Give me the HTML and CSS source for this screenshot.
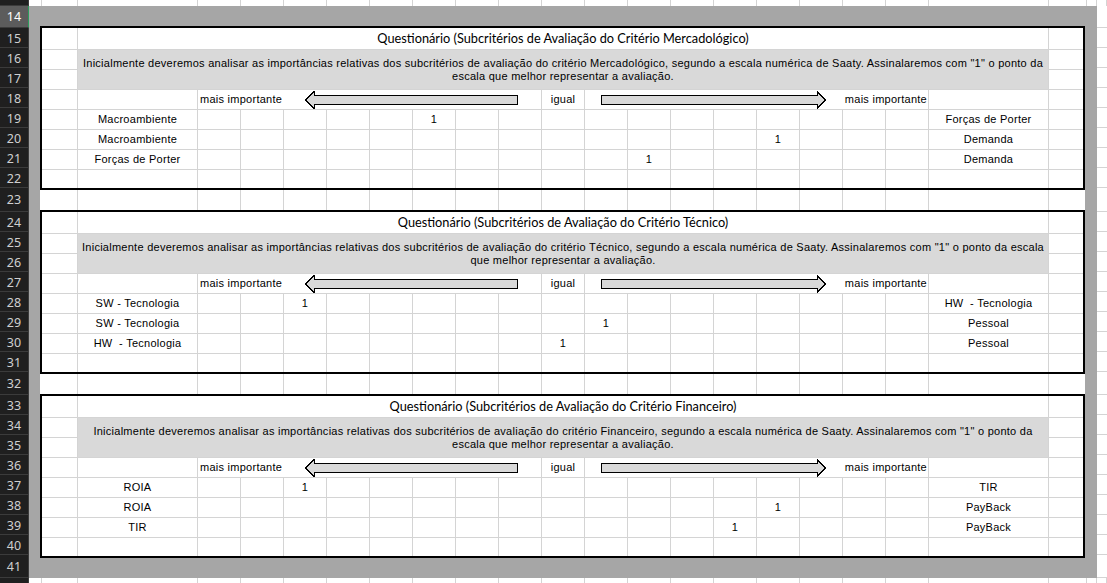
FILE: index.html
```html
<!DOCTYPE html>
<html lang="pt">
<head>
<meta charset="utf-8">
<title>Questionário</title>
<link rel="stylesheet" href="styles.css">
</head>
<body>
<div class="app">
  <div class="rh">
    <div class="h13"><span>13</span></div>
    <div class="h14 sel">14</div>
    <div>15</div><div>16</div><div>17</div><div>18</div><div>19</div><div>20</div><div>21</div><div>22</div>
    <div class="h24">23</div>
    <div>24</div><div>25</div><div>26</div><div>27</div><div>28</div><div>29</div><div>30</div><div>31</div>
    <div class="h23">32</div>
    <div>33</div><div>34</div><div>35</div><div>36</div><div>37</div><div>38</div><div>39</div><div>40</div>
    <div class="h23">41</div>
    <div class="h42">42</div>
  </div>
  <div class="sheet">
    <div class="edge top"><i></i><i></i><i></i><i></i><i></i><i></i><i></i><i></i><i></i><i></i><i></i><i></i><i></i><i></i><i></i><i></i><i></i><i></i><i></i><i></i><i></i><i></i><i></i><i></i></div>
    <div class="mid">
      <div class="frame">
        <div class="blk">
          <i></i><div class="title">Questionário (Subcritérios de Avaliação do Critério Mercadológico)</div><i class="z"></i>
          <i></i><div class="note">Inicialmente deveremos analisar as importâncias relativas dos subcritérios de avaliação do critério Mercadológico, segundo a escala numérica de Saaty. Assinalaremos com "1" o ponto da<br>escala que melhor representar a avaliação.</div><i class="z"></i>
          <i></i><i class="z"></i>
          <i></i><i></i><div class="lft"><span>mais importante</span><svg class="arl" width="213" height="18" viewBox="0 0 213 18" shape-rendering="crispEdges"><path d="M0.5 9 L9 0.5 L9 4.5 L212.5 4.5 L212.5 13.5 L9 13.5 L9 17.5 Z" fill="#d9d9d9" stroke="#000" stroke-width="1"/></svg></div><div class="eq">igual</div><div class="rgt"><svg class="arr" width="225" height="18" viewBox="0 0 225 18" shape-rendering="crispEdges"><path d="M0.5 4.5 L216 4.5 L216 0.5 L224.5 9 L216 17.5 L216 13.5 L0.5 13.5 Z" fill="#d9d9d9" stroke="#000" stroke-width="1"/></svg><span>mais importante</span></div><i></i><i class="z"></i>
          <i></i><i>Macroambiente</i><i></i><i></i><i></i><i></i><i></i><i>1</i><i></i><i></i><i></i><i></i><i></i><i></i><i></i><i></i><i></i><i></i><i></i><i>Forças de Porter</i><i class="z"></i>
          <i></i><i>Macroambiente</i><i></i><i></i><i></i><i></i><i></i><i></i><i></i><i></i><i></i><i></i><i></i><i></i><i></i><i>1</i><i></i><i></i><i></i><i>Demanda</i><i class="z"></i>
          <i></i><i>Forças de Porter</i><i></i><i></i><i></i><i></i><i></i><i></i><i></i><i></i><i></i><i></i><i>1</i><i></i><i></i><i></i><i></i><i></i><i></i><i>Demanda</i><i class="z"></i>
          <i></i><i></i><i></i><i></i><i></i><i></i><i></i><i></i><i></i><i></i><i></i><i></i><i></i><i></i><i></i><i></i><i></i><i></i><i></i><i></i><i class="z"></i>
        </div>
        <div class="strip"><i></i><i></i><i></i><i></i><i></i><i></i><i></i><i></i><i></i><i></i><i></i><i></i><i></i><i></i><i></i><i></i><i></i><i></i><i></i><i></i><i class="z"></i></div>
        <div class="blk">
          <i></i><div class="title">Questionário (Subcritérios de Avaliação do Critério Técnico)</div><i class="z"></i>
          <i></i><div class="note">Inicialmente deveremos analisar as importâncias relativas dos subcritérios de avaliação do critério Técnico, segundo a escala numérica de Saaty. Assinalaremos com "1" o ponto da escala<br>que melhor representar a avaliação.</div><i class="z"></i>
          <i></i><i class="z"></i>
          <i></i><i></i><div class="lft"><span>mais importante</span><svg class="arl" width="213" height="18" viewBox="0 0 213 18" shape-rendering="crispEdges"><path d="M0.5 9 L9 0.5 L9 4.5 L212.5 4.5 L212.5 13.5 L9 13.5 L9 17.5 Z" fill="#d9d9d9" stroke="#000" stroke-width="1"/></svg></div><div class="eq">igual</div><div class="rgt"><svg class="arr" width="225" height="18" viewBox="0 0 225 18" shape-rendering="crispEdges"><path d="M0.5 4.5 L216 4.5 L216 0.5 L224.5 9 L216 17.5 L216 13.5 L0.5 13.5 Z" fill="#d9d9d9" stroke="#000" stroke-width="1"/></svg><span>mais importante</span></div><i></i><i class="z"></i>
          <i></i><i>SW - Tecnologia</i><i></i><i></i><i>1</i><i></i><i></i><i></i><i></i><i></i><i></i><i></i><i></i><i></i><i></i><i></i><i></i><i></i><i></i><i>HW&nbsp; - Tecnologia</i><i class="z"></i>
          <i></i><i>SW - Tecnologia</i><i></i><i></i><i></i><i></i><i></i><i></i><i></i><i></i><i></i><i>1</i><i></i><i></i><i></i><i></i><i></i><i></i><i></i><i>Pessoal</i><i class="z"></i>
          <i></i><i>HW&nbsp; - Tecnologia</i><i></i><i></i><i></i><i></i><i></i><i></i><i></i><i></i><i>1</i><i></i><i></i><i></i><i></i><i></i><i></i><i></i><i></i><i>Pessoal</i><i class="z"></i>
          <i></i><i></i><i></i><i></i><i></i><i></i><i></i><i></i><i></i><i></i><i></i><i></i><i></i><i></i><i></i><i></i><i></i><i></i><i></i><i></i><i class="z"></i>
        </div>
        <div class="strip"><i></i><i></i><i></i><i></i><i></i><i></i><i></i><i></i><i></i><i></i><i></i><i></i><i></i><i></i><i></i><i></i><i></i><i></i><i></i><i></i><i class="z"></i></div>
        <div class="blk">
          <i></i><div class="title">Questionário (Subcritérios de Avaliação do Critério Financeiro)</div><i class="z"></i>
          <i></i><div class="note">Inicialmente deveremos analisar as importâncias relativas dos subcritérios de avaliação do critério Financeiro, segundo a escala numérica de Saaty. Assinalaremos com "1" o ponto da<br>escala que melhor representar a avaliação.</div><i class="z"></i>
          <i></i><i class="z"></i>
          <i></i><i></i><div class="lft"><span>mais importante</span><svg class="arl" width="213" height="18" viewBox="0 0 213 18" shape-rendering="crispEdges"><path d="M0.5 9 L9 0.5 L9 4.5 L212.5 4.5 L212.5 13.5 L9 13.5 L9 17.5 Z" fill="#d9d9d9" stroke="#000" stroke-width="1"/></svg></div><div class="eq">igual</div><div class="rgt"><svg class="arr" width="225" height="18" viewBox="0 0 225 18" shape-rendering="crispEdges"><path d="M0.5 4.5 L216 4.5 L216 0.5 L224.5 9 L216 17.5 L216 13.5 L0.5 13.5 Z" fill="#d9d9d9" stroke="#000" stroke-width="1"/></svg><span>mais importante</span></div><i></i><i class="z"></i>
          <i></i><i>ROIA</i><i></i><i></i><i>1</i><i></i><i></i><i></i><i></i><i></i><i></i><i></i><i></i><i></i><i></i><i></i><i></i><i></i><i></i><i>TIR</i><i class="z"></i>
          <i></i><i>ROIA</i><i></i><i></i><i></i><i></i><i></i><i></i><i></i><i></i><i></i><i></i><i></i><i></i><i></i><i>1</i><i></i><i></i><i></i><i>PayBack</i><i class="z"></i>
          <i></i><i>TIR</i><i></i><i></i><i></i><i></i><i></i><i></i><i></i><i></i><i></i><i></i><i></i><i></i><i>1</i><i></i><i></i><i></i><i></i><i>PayBack</i><i class="z"></i>
          <i></i><i></i><i></i><i></i><i></i><i></i><i></i><i></i><i></i><i></i><i></i><i></i><i></i><i></i><i></i><i></i><i></i><i></i><i></i><i></i><i class="z"></i>
        </div>
      </div>
      <div class="rcol">
        <div class="r22"></div><div></div><div></div><div></div><div></div><div></div><div></div><div></div><div></div>
        <div class="r24"></div><div></div><div></div><div></div><div></div><div></div><div></div><div></div><div></div>
        <div class="r23"></div><div></div><div></div><div></div><div></div><div></div><div></div><div></div><div></div>
        <div class="r23"></div>
      </div>
    </div>
    <div class="edge bot"><i></i><i></i><i></i><i></i><i></i><i></i><i></i><i></i><i></i><i></i><i></i><i></i><i></i><i></i><i></i><i></i><i></i><i></i><i></i><i></i><i></i><i></i><i></i><i></i></div>
  </div>
</div>
</body>
</html>
```

FILE: styles.css
```css
* { box-sizing: border-box; }
html, body { margin: 0; padding: 0; background: #fff; }
body { font-family: "Liberation Sans", Arial, sans-serif; font-size: 11px; color: #000; }

.app { display: flex; width: 1107px; height: 583px; overflow: hidden; }

/* row headers */
.rh { flex: none; width: 29px; display: flex; flex-direction: column; background: #1f1f1f; }
.rh > div {
  flex: none; height: 20px; line-height: 21px; text-align: center;
  font-family: "Noto Sans", sans-serif; font-size: 12.5px; color: #cfcfcf;
  border-bottom: 1px solid #3b3b3b; border-right: 1px solid #3b3b3b; overflow: hidden;
}
.rh > .h13 { height: 6px; }
.rh > .h13 span { display: block; margin-top: -14px; line-height: 20px; }
.rh > .h14 { height: 22px; line-height: 21px; }
.rh > .sel { background: #5c5c5c; color: #fff; border-right: 1px solid #2e9b5c; }
.rh > .h24 { height: 24px; line-height: 23px; }
.rh > .h23 { height: 23px; line-height: 24px; }
.rh > .h42 { height: 5px; border-bottom: none; line-height: 22px; }

/* sheet */
.sheet { flex: none; width: 1078px; display: flex; flex-direction: column; }
.edge { display: grid; grid-template-columns: 13px 36px 120px repeat(17, 43px) 120px 38px 10px 10px; }
.edge i { border-right: 1px solid #d4d4d4; }
.edge.top { height: 6px; }
.edge.bot { height: 5px; }

.mid { display: flex; height: 572px; }
.frame { flex: none; width: 1068px; background: #a6a6a6; padding: 20px 12px 20px 11px; display: flex; flex-direction: column; }
.rcol { flex: none; width: 10px; display: flex; flex-direction: column; }
.rcol > div { flex: none; height: 20px; border-bottom: 1px solid #d4d4d4; }
.rcol > .r22 { height: 22px; }
.rcol > .r24 { height: 24px; }
.rcol > .r23 { height: 23px; }

/* blocks */
.blk {
  flex: none; width: 1045px; height: 164px; border: 2px solid #000; background: #fff;
  display: grid; grid-template-columns: 36px 120px repeat(17, 43px) 120px 34px;
  grid-template-rows: 22px repeat(6, 20px) 18px;
  letter-spacing: 0.26px;
}
.blk > * {
  border-right: 1px solid #d4d4d4; border-bottom: 1px solid #d4d4d4;
  font-style: normal; text-align: center; line-height: 19px; white-space: nowrap; overflow: visible;
}
.blk > .z { border-right: none; }
.blk > :nth-last-child(-n+21) { border-bottom: none; }

.title { grid-column: span 19; font-family: Lato, "Liberation Sans", sans-serif; font-size: 12.75px; letter-spacing: 0; line-height: 20px; }
.note {
  grid-column: span 19; grid-row: span 2; background: #d9d9d9;
  display: flex; align-items: center; justify-content: center; line-height: 13px; padding-top: 1px;
}
.lft { grid-column: span 8; display: flex; align-items: center; padding-left: 2px; text-align: left; }
.lft .arl { margin-left: auto; margin-right: 23px; display: block; }
.rgt { grid-column: span 8; display: flex; align-items: center; text-align: left; }
.rgt .arr { margin-left: 16px; display: block; flex: none; }
.rgt span { margin-left: auto; padding-right: 1px; }

.strip {
  flex: none; width: 1045px; height: 20px; background: #fff;
  display: grid; grid-template-columns: 38px 120px repeat(17, 43px) 120px 36px;
}
.strip i { border-right: 1px solid #d4d4d4; }
.strip .z { border-right: none; }
```
